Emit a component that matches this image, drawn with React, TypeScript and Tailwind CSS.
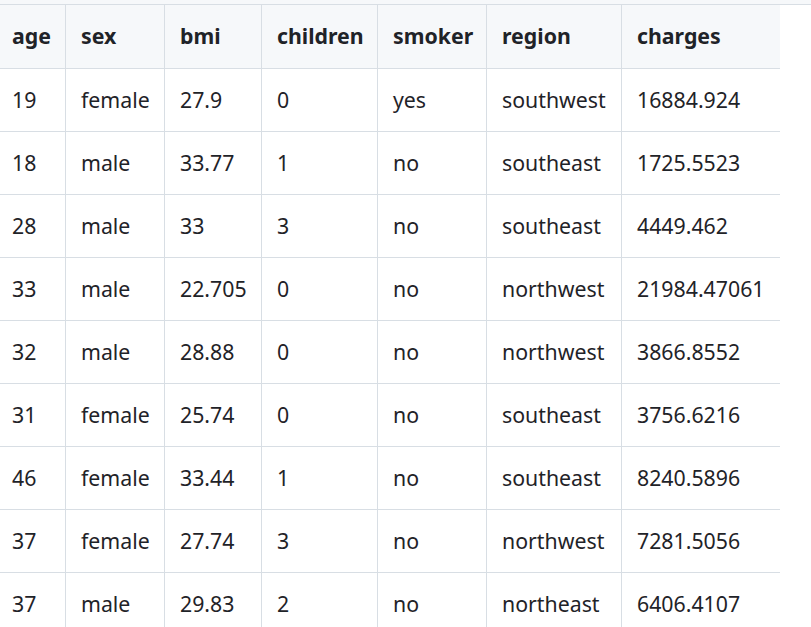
import React from "react";

const headers = ["age", "sex", "bmi", "children", "smoker", "region", "charges"];
const rows = [
  ["19", "female", "27.9", "0", "yes", "southwest", "16884.924"],
  ["18", "male", "33.77", "1", "no", "southeast", "1725.5523"],
  ["28", "male", "33", "3", "no", "southeast", "4449.462"],
  ["33", "male", "22.705", "0", "no", "northwest", "21984.47061"],
  ["32", "male", "28.88", "0", "no", "northwest", "3866.8552"],
  ["31", "female", "25.74", "0", "no", "southeast", "3756.6216"],
  ["46", "female", "33.44", "1", "no", "southeast", "8240.5896"],
  ["37", "female", "27.74", "3", "no", "northwest", "7281.5056"],
  ["37", "male", "29.83", "2", "no", "northeast", "6406.4107"],
];

function Cell({ i, children, header }: { i: number; children: React.ReactNode; header?: boolean }) {
  const pad = i === 0 ? "pl-[12px]" : "pl-[15px]";
  const br = i === 6 ? "" : "border-r border-r-[#d8dee4]";
  return (
    <div
      className={`${header ? "h-[64px] pb-[2px] bg-[#f6f8fa] font-bold" : "h-[63px] bg-white"} flex items-center border-b border-b-[#d8dee4] ${br} ${pad} whitespace-nowrap`}
    >
      {children}
    </div>
  );
}

export default function App() {
  return (
    <div
      className="w-[811px] h-[627px] overflow-hidden bg-white text-[#1f2328] text-[21.3px]"
      style={{ fontFamily: '"Noto Sans", "Open Sans", sans-serif' }}
    >
      <div className="h-[4px] bg-[#f6f8fa] border-b border-b-[#d8dee4] box-content" />
      <div className="grid grid-cols-[66px_99px_97px_116px_109px_135px_158px]">
        {headers.map((h, i) => (
          <Cell key={h} i={i} header>
            {h}
          </Cell>
        ))}
        {rows.map((r, ri) =>
          r.map((c, i) => (
            <Cell key={ri + "-" + i} i={i}>
              {c}
            </Cell>
          ))
        )}
      </div>
    </div>
  );
}
